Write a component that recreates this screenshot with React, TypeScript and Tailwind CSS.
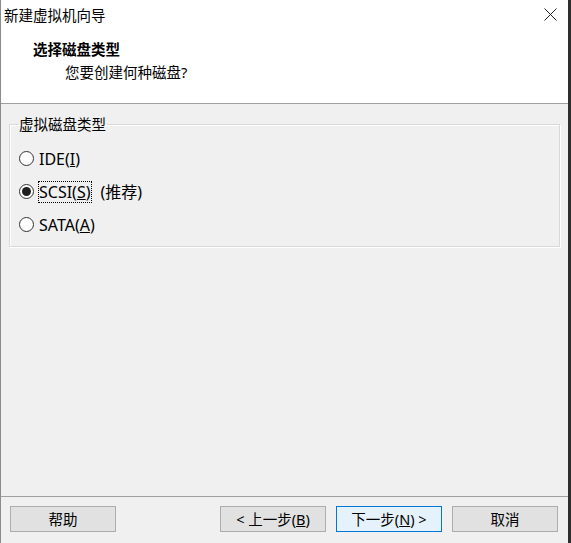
import type { ReactNode } from "react";

function Radio({ checked, children }: { checked?: boolean; children: ReactNode }) {
  return (
    <div className="flex h-[33px] items-center pl-[9px]">
      <span className="flex h-[15px] w-[15px] shrink-0 items-center justify-center rounded-full border border-[#333] bg-white">
        {checked && <span className="h-[9px] w-[9px] rounded-full bg-[#1f1f1f]" />}
      </span>
      <div className="ml-[4px] flex items-center">{children}</div>
    </div>
  );
}

function Button({ primary, children }: { primary?: boolean; children: ReactNode }) {
  return (
    <button
      type="button"
      className={`flex h-[26px] w-[106px] items-center justify-center border text-[14.5px] leading-[20px] text-black ${
        primary ? "border-[#0078d7] bg-[#e5f1fb]" : "border-[#adadad] bg-[#e1e1e1]"
      }`}
    >
      {children}
    </button>
  );
}

export default function App() {
  return (
    <div className="flex h-[543px] w-[571px] font-['Noto_Sans','Noto_Sans_CJK_SC',sans-serif] text-black">
      {/* Dialog window */}
      <div className="flex w-[568px] flex-col border-l border-[#8c8c8c]">
        {/* Title + wizard header */}
        <div className="h-[104px] shrink-0 border-b border-[#a0a0a0] bg-white">
          <div className="flex h-[30px] items-center justify-between pl-[3px] pr-[11px]">
            <span className="text-[14.5px] leading-[20px]">新建虚拟机向导</span>
            <svg width="13" height="13" viewBox="0 0 13 13" className="mt-[-1px]">
              <path d="M0.5 0.5 L12.5 12.5 M12.5 0.5 L0.5 12.5" stroke="#222" strokeWidth="1" />
            </svg>
          </div>
          <div className="mt-[9px] pl-[32px] text-[14.5px] font-bold leading-[20px]">选择磁盘类型</div>
          <div className="mt-[3px] pl-[64px] text-[14.5px] leading-[20px]">您要创建何种磁盘?</div>
        </div>

        {/* Body */}
        <div className="flex-1 bg-[#f0f0f0] pt-[10px]">
          <fieldset className="ml-[8px] w-[551px] border border-[#d9d9d9] pb-[5px] shadow-[1px_1px_0_#fff,inset_1px_1px_0_#fff]">
            <legend className="ml-[8px] px-[1px] text-[14.5px] leading-[20px]">虚拟磁盘类型</legend>
            <div className="pt-[8px] text-[16px] leading-[20px]">
              <Radio>
                <span className="px-[1px]">
                  IDE(<span className="underline">I</span>)
                </span>
              </Radio>
              <Radio checked>
                <span className="border border-dotted border-black">
                  SCSI(<span className="underline">S</span>)
                </span>
                <span className="ml-[9px]">(推荐)</span>
              </Radio>
              <Radio>
                <span className="px-[1px]">
                  SATA(<span className="underline">A</span>)
                </span>
              </Radio>
            </div>
          </fieldset>
        </div>

        {/* Footer buttons */}
        <div className="flex h-[47px] shrink-0 border-t border-[#a0a0a0] bg-[#f0f0f0] pl-[9px] pt-[9px]">
          <Button>帮助</Button>
          <div className="ml-[104px] flex gap-[10px]">
            <Button>
              &lt; 上一步(<span className="underline">B</span>)
            </Button>
            <Button primary>
              下一步(<span className="underline">N</span>) &gt;
            </Button>
            <Button>取消</Button>
          </div>
        </div>
      </div>
      {/* Desktop behind the window */}
      <div className="flex-1 bg-[#2e2e2e]" />
    </div>
  );
}
